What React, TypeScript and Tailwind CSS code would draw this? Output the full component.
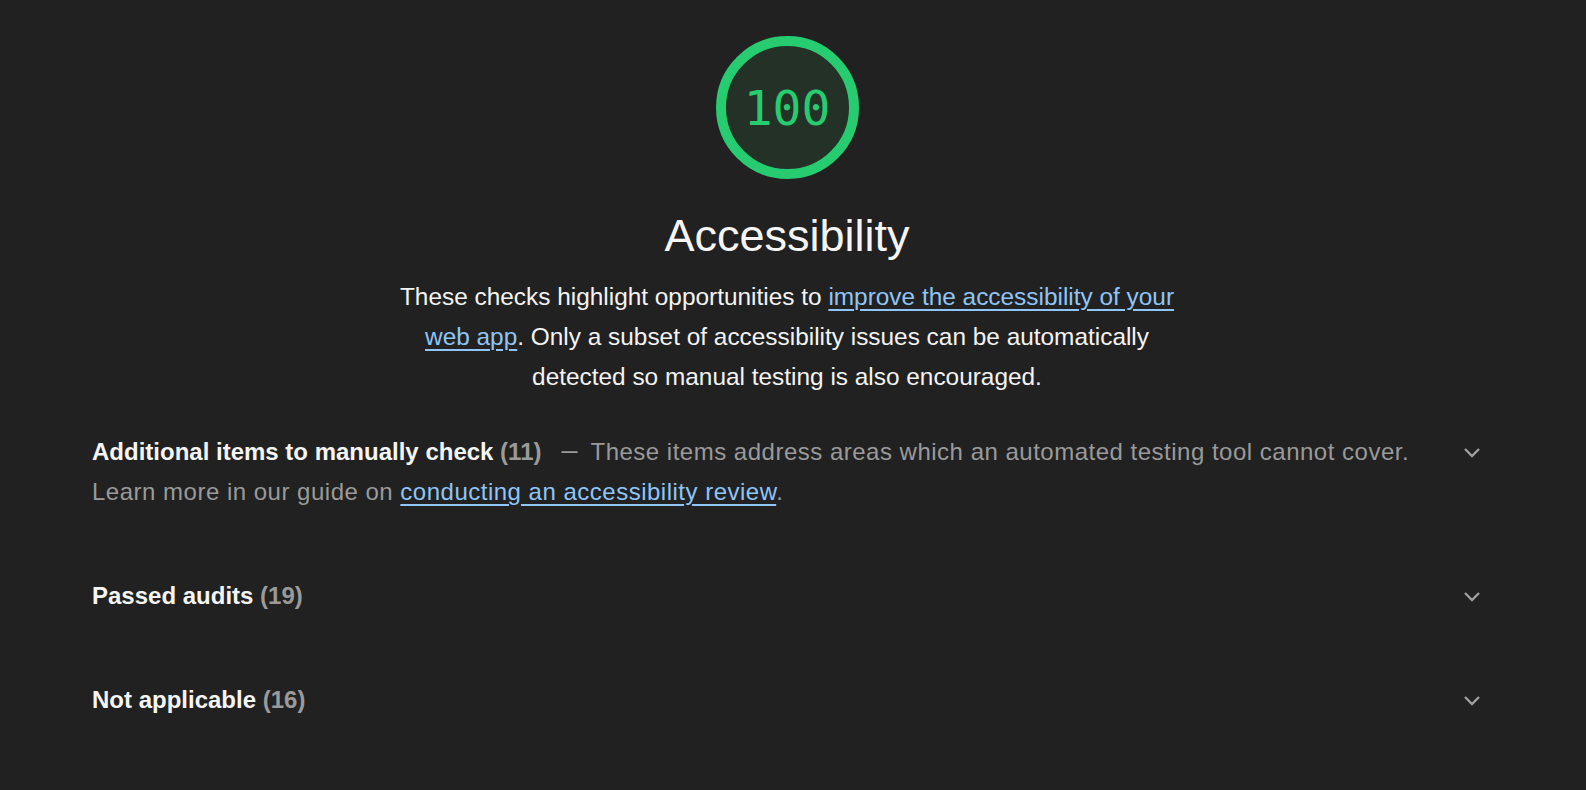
import React from "react";

function Chevron() {
  return (
    <svg width="18" height="11" viewBox="0 0 18 11" fill="none" aria-hidden="true">
      <path d="M2 2 L9 9 L16 2" stroke="#9e9e9e" strokeWidth="2.4" strokeLinecap="butt" strokeLinejoin="miter" />
    </svg>
  );
}

function Gauge() {
  return (
    <div className="relative w-[143px] h-[143px]">
      <svg width="143" height="143" viewBox="0 0 143 143">
        <circle cx="71.5" cy="71.5" r="66.5" fill="#233127" stroke="#26cc6f" strokeWidth="10" />
      </svg>
      <div className="absolute inset-0 flex items-center justify-center text-[48px] leading-none text-[#26cc6f] font-['DejaVu_Sans_Mono',monospace]">
        100
      </div>
    </div>
  );
}

export default function App() {
  return (
    <div className="min-h-screen w-full bg-[#212121] text-[#f3f3f3] font-['Liberation_Sans',Arial,sans-serif]">
      <div className="flex flex-col items-center pt-[36px] pr-[12px]">
        <Gauge />
        <h1 className="mt-[31px] text-[45px] leading-[52px] font-normal text-[#f5f5f5]">Accessibility</h1>
        <p className="mt-[15px] max-w-[810px] text-center text-[24.4px] leading-[40px] text-[#f3f3f3]">
          These checks highlight opportunities to{" "}
          <a href="#" className="text-[#8fc5f7] underline decoration-2 underline-offset-[4px]">
            improve the accessibility of your web app
          </a>
          . Only a subset of accessibility issues can be automatically detected so manual testing is also encouraged.
        </p>
      </div>

      <div className="px-[92px] mt-[35px] flex flex-col gap-[64px]">
        <div className="flex items-start">
          <div className="flex-1 pr-[40px] text-[24px] leading-[40px]">
            <span className="font-bold text-[#f5f5f5]">Additional items to manually check</span>{" "}
            <span className="font-bold text-[#9a9a9a]">(11)</span>
            <span className="font-bold text-[#9a9a9a] text-[16px] leading-[16px] align-[3px] ml-[20px] mr-[13px]">—</span>
            <span className="text-[#9a9a9a] tracking-[0.5px]">
              These items address areas which an automated testing tool cannot cover. Learn more in our guide on{" "}
              <a href="#" className="text-[#8fc5f7] underline decoration-2 underline-offset-[4px]">
                conducting an accessibility review
              </a>
              .
            </span>
          </div>
          <div className="w-[24px] h-[40px] mr-[10px] flex items-center justify-center">
            <Chevron />
          </div>
        </div>

        <div className="flex items-start">
          <div className="flex-1 text-[24px] leading-[40px]">
            <span className="font-bold text-[#f5f5f5]">Passed audits</span>{" "}
            <span className="font-bold text-[#9a9a9a]">(19)</span>
          </div>
          <div className="w-[24px] h-[40px] mr-[10px] flex items-center justify-center">
            <Chevron />
          </div>
        </div>

        <div className="flex items-start">
          <div className="flex-1 text-[24px] leading-[40px]">
            <span className="font-bold text-[#f5f5f5]">Not applicable</span>{" "}
            <span className="font-bold text-[#9a9a9a]">(16)</span>
          </div>
          <div className="w-[24px] h-[40px] mr-[10px] flex items-center justify-center">
            <Chevron />
          </div>
        </div>
      </div>
    </div>
  );
}
